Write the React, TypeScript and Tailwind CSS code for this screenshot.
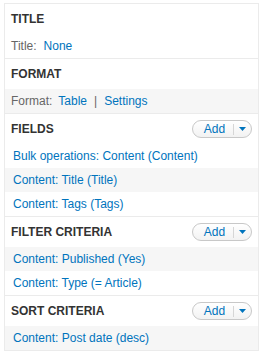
import React from "react";

const AddButton = () => (
  <div className="flex h-[18px] w-[60px] items-center rounded-full border border-[#c8c8c8] bg-gradient-to-b from-white to-[#f2f2f2]">
    <span className="w-[40px] pl-[3px] text-center text-[12px] leading-none text-[#0074bd]">Add</span>
    <span className="h-[11px] w-px bg-[#d6d6d6]" />
    <span className="flex flex-1 items-center justify-center">
      <svg width="7" height="4" viewBox="0 0 7 4">
        <path d="M0 0 L7 0 L3.5 4 Z" fill="#0074bd" />
      </svg>
    </span>
  </div>
);

const Heading = ({ title, add }: { title: string; add?: boolean }) => (
  <div className="flex h-[30px] items-center justify-between pl-[6px] pr-[6px]">
    <span className="text-[12px] font-bold text-[#333]">{title}</span>
    {add && <AddButton />}
  </div>
);

const Row = ({ children, gray }: { children: React.ReactNode; gray?: boolean }) => (
  <div className={`flex h-[24px] items-center pl-[8px] text-[12px] ${gray ? "bg-[#f6f6f6]" : "bg-white"}`}>
    {children}
  </div>
);

const Link = ({ children }: { children: React.ReactNode }) => (
  <span className="text-[#0074bd]">{children}</span>
);

export default function App() {
  return (
    <div className="min-h-[358px] bg-white pt-[3px] pl-[4px]" style={{ fontFamily: '"Liberation Sans", Arial, sans-serif' }}>
      <div className="w-[255px] border border-[#ebebeb]">
        <div>
          <Heading title="TITLE" />
          <div className="flex h-[24px] items-center pl-[6px] text-[12px]">
            <span className="text-[#666]">Title:</span>
            <span className="ml-[7px] text-[#0074bd]">None</span>
          </div>
        </div>
        <div className="border-t border-[#ebebeb]">
          <Heading title="FORMAT" />
          <div className="flex h-[24px] items-center bg-[#f6f6f6] pl-[6px] text-[12px]">
            <span className="text-[#666]">Format:</span>
            <span className="ml-[6px] text-[#0074bd]">Table</span>
            <span className="ml-[7px] text-[#666]">|</span>
            <span className="ml-[7px] text-[#0074bd]">Settings</span>
          </div>
        </div>
        <div className="border-t border-[#ebebeb]">
          <Heading title="FIELDS" add />
          <Row><Link>Bulk operations: Content (Content)</Link></Row>
          <Row gray><Link>Content: Title (Title)</Link></Row>
          <Row><Link>Content: Tags (Tags)</Link></Row>
        </div>
        <div className="border-t border-[#ebebeb]">
          <Heading title="FILTER CRITERIA" add />
          <Row gray><Link>Content: Published (Yes)</Link></Row>
          <Row><Link>Content: Type (= Article)</Link></Row>
        </div>
        <div className="border-t border-[#ebebeb]">
          <Heading title="SORT CRITERIA" add />
          <Row gray><Link>Content: Post date (desc)</Link></Row>
        </div>
      </div>
    </div>
  );
}
